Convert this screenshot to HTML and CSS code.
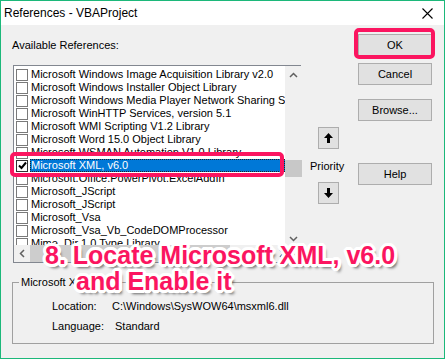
FILE: index.html
```html
<!DOCTYPE html>
<html lang="en">
<head>
  <meta charset="UTF-8">
  <title>References - VBAProject</title>
  <link rel="stylesheet" href="styles.css">
</head>
<body>
<div class="window">
  <div class="titlebar">
    <span class="title">References - VBAProject</span>
    <svg class="close" width="11" height="11" viewBox="0 0 11 11"><path d="M0.5 0.5 L10.5 10.5 M10.5 0.5 L0.5 10.5" stroke="#000" stroke-width="1.1" fill="none"/></svg>
  </div>

  <div class="dialog">
    <div class="top">
      <div class="refs">
        <div class="label">Available References:</div>
        <div class="listbox">
          <div class="viewport">
            <ul class="items">
              <li><span class="check"></span><span class="name">Microsoft Windows Image Acquisition Library v2.0</span></li>
              <li><span class="check"></span><span class="name">Microsoft Windows Installer Object Library</span></li>
              <li><span class="check"></span><span class="name">Microsoft Windows Media Player Network Sharing Service Type Library</span></li>
              <li><span class="check"></span><span class="name">Microsoft WinHTTP Services, version 5.1</span></li>
              <li><span class="check"></span><span class="name">Microsoft WMI Scripting V1.2 Library</span></li>
              <li><span class="check"></span><span class="name">Microsoft Word 15.0 Object Library</span></li>
              <li><span class="check"></span><span class="name">Microsoft WSMAN Automation V1.0 Library</span></li>
              <li class="selected"><span class="check checked"><svg width="9" height="9" viewBox="0 0 9 9"><path d="M1 4.5 L3.5 7 L8 1.5" stroke="#000" stroke-width="2" fill="none"/></svg></span><span class="name">Microsoft XML, v6.0</span></li>
              <li><span class="check"></span><span class="name">Microsoft.Office.PowerPivot.ExcelAddIn</span></li>
              <li><span class="check"></span><span class="name">Microsoft_JScript</span></li>
              <li><span class="check"></span><span class="name">Microsoft_JScript</span></li>
              <li><span class="check"></span><span class="name">Microsoft_Vsa</span></li>
              <li><span class="check"></span><span class="name">Microsoft_Vsa_Vb_CodeDOMProcessor</span></li>
              <li><span class="check"></span><span class="name">Mime_Dir 1.0 Type Library</span></li>
            </ul>
          </div>
          <div class="vscroll">
            <svg class="arrow" width="9" height="6" viewBox="0 0 9 6"><path d="M1 5 L4.5 1.5 L8 5" stroke="#606060" stroke-width="1.5" fill="none"/></svg>
            <div class="vthumb"></div>
            <svg class="arrow down" width="9" height="6" viewBox="0 0 9 6"><path d="M1 1 L4.5 4.5 L8 1" stroke="#606060" stroke-width="1.5" fill="none"/></svg>
          </div>
          <div class="hscroll">
            <svg class="arrow" width="6" height="9" viewBox="0 0 6 9"><path d="M5 1 L1.5 4.5 L5 8" stroke="#606060" stroke-width="1.5" fill="none"/></svg>
            <div class="hthumb"></div>
            <svg class="arrow right" width="6" height="9" viewBox="0 0 6 9"><path d="M1 1 L4.5 4.5 L1 8" stroke="#606060" stroke-width="1.5" fill="none"/></svg>
          </div>
          <div class="corner"></div>
        </div>
      </div>

      <div class="priority">
        <button class="btn arrow-btn"><svg width="9" height="10" viewBox="0 0 9 10"><path d="M4.5 0 L9 5 L6 5 L6 10 L3 10 L3 5 L0 5 Z" fill="#000"/></svg></button>
        <div class="priority-label">Priority</div>
        <button class="btn arrow-btn"><svg width="9" height="10" viewBox="0 0 9 10"><path d="M4.5 10 L9 5 L6 5 L6 0 L3 0 L3 5 L0 5 Z" fill="#000"/></svg></button>
      </div>

      <div class="buttons">
        <button class="btn">OK</button>
        <button class="btn cancel">Cancel</button>
        <button class="btn browse">Browse...</button>
        <button class="btn help">Help</button>
      </div>
    </div>

    <fieldset class="group">
      <legend>Microsoft XML, v6.0</legend>
      <div class="info">
        <span class="key">Location:</span><span class="val">C:\Windows\SysWOW64\msxml6.dll</span>
        <span class="key">Language:</span><span class="val lang">Standard</span>
      </div>
    </fieldset>
  </div>

  <!-- annotation overlay -->
  <div class="mark mark-ok"></div>
  <div class="mark mark-row"></div>
  <div class="callout">
    <span class="line">8. Locate Microsoft XML, v6.0</span>
    <span class="line second">and Enable it</span>
  </div>
</div>
</body>
</html>
```

FILE: styles.css
```css
body{
  margin: 0;
  padding: 0;
  background: #fff;
}

.window{
  position: relative;
  width: 445px;
  height: 359px;
  box-sizing: border-box;
  border: 1px solid #1cb87a;
  background: #f0f0f0;
  font-family: "Liberation Sans", Arial, sans-serif;
  font-size: 11px;
  color: #000;
  overflow: hidden;
}

.titlebar{
  height: 24px;
  background: #fff;
  display: flex;
  align-items: center;
  justify-content: space-between;
  padding: 0 11px 0 3px;
}

.title{
  font-size: 12px;
}

.close{
  margin-top: 1px;
}

.dialog{
  padding: 9px 0 0 12px;
}

.top{
  display: flex;
}

.refs{
  width: 288px;
}

.label{
  margin: 5px 0 13px -1px;
  line-height: 13px;
}

/* list box */
.listbox{
  display: grid;
  grid-template-columns: 1fr 17px;
  grid-template-rows: 1fr 17px;
  height: 198px;
  box-sizing: border-box;
  border: 1px solid #828790;
  background: #fff;
}

.viewport{
  overflow: hidden;
}

.items{
  list-style: none;
  margin: 0;
  padding: 2px 0 0 2px;
}

.items li{
  display: flex;
  align-items: center;
  height: 13px;
  white-space: nowrap;
}

.check{
  flex: none;
  width: 12px;
  height: 12px;
  box-sizing: border-box;
  border: 1px solid #7a7a7a;
  background: #fff;
  margin-right: 2px;
  display: flex;
  align-items: center;
  justify-content: center;
}

.checked{
  border-color: #333;
}

.name{
  line-height: 13px;
  padding: 0 1px;
}

.selected .name{
  flex: 1;
  background: #0078d7;
  color: #fff;
  outline: 1px dotted #222;
  outline-offset: -1px;
}

.vscroll{
  background: #f0f0f0;
  position: relative;
  display: flex;
  flex-direction: column;
  align-items: center;
}

.vscroll .arrow{
  margin-top: 6px;
}

.vthumb{
  width: 17px;
  height: 17px;
  margin-top: 82px;
  background: #c8c8c8;
}

.vscroll .down{
  margin-top: 59px;
}

.hscroll{
  background: #f0f0f0;
  display: flex;
  align-items: center;
}

.hscroll .arrow{
  margin-left: 5px;
}

.hthumb{
  width: 200px;
  height: 17px;
  margin-left: 5px;
  background: #cdcdcd;
}

.hscroll .right{
  margin-left: 49px;
}

.corner{
  background: #f0f0f0;
}

/* buttons */
.btn{
  display: flex;
  align-items: center;
  justify-content: center;
  width: 74px;
  height: 22px;
  padding: 0;
  border: 1px solid #adadad;
  background: #e1e1e1;
  font-family: "Liberation Sans", Arial, sans-serif;
  font-size: 11px;
  color: #000;
}

.priority{
  width: 57px;
  display: flex;
  flex-direction: column;
  align-items: flex-start;
}

.arrow-btn{
  width: 21px;
  height: 22px;
  margin-left: 17px;
}

.priority .arrow-btn:first-child{
  margin-top: 93px;
}

.priority-label{
  margin: 11px 0 9px 9px;
  line-height: 13px;
}

.buttons{
  display: flex;
  flex-direction: column;
}

.cancel{
  margin-top: 7px;
}

.browse{
  margin-top: 14px;
}

.help{
  margin-top: 42px;
}

/* group box */
.group{
  margin: 13px 0 0 -1px;
  width: 422px;
  height: 68px;
  box-sizing: border-box;
  padding: 0;
  border: 1px solid #a0a0a0;
}

.group legend{
  margin-left: 6px;
  padding: 0 2px;
  line-height: 13px;
}

.info{
  display: grid;
  grid-template-columns: 60px 1fr;
  row-gap: 7px;
  padding: 11px 0 0 39px;
  line-height: 13px;
}

.lang{
  padding-left: 3px;
}

/* annotation */
.mark{
  position: absolute;
  border: 4px solid #fb1560;
  border-radius: 5px;
}

.mark-ok{
  left: 353px;
  top: 27px;
  width: 73px;
  height: 23px;
}

.mark-row{
  left: 9px;
  top: 151px;
  width: 266px;
  height: 17px;
}

.callout{
  position: absolute;
  left: 44px;
  top: 241px;
  font-family: "Liberation Sans", Arial, sans-serif;
  font-weight: bold;
  font-size: 25px;
  line-height: 26px;
  color: #fb1560;
  text-shadow:
    3px 0 0 #fff, -3px 0 0 #fff, 0 3px 0 #fff, 0 -3px 0 #fff,
    2px 2px 0 #fff, -2px -2px 0 #fff, 2px -2px 0 #fff, -2px 2px 0 #fff,
    3px 1px 0 #fff, -3px 1px 0 #fff, 3px -1px 0 #fff, -3px -1px 0 #fff,
    1px 3px 0 #fff, -1px 3px 0 #fff, 1px -3px 0 #fff, -1px -3px 0 #fff,
    3px 4px 3px rgba(0, 0, 0, 0.6);
}

.line{
  display: block;
  white-space: nowrap;
}

.second{
  padding-left: 31px;
}
```
